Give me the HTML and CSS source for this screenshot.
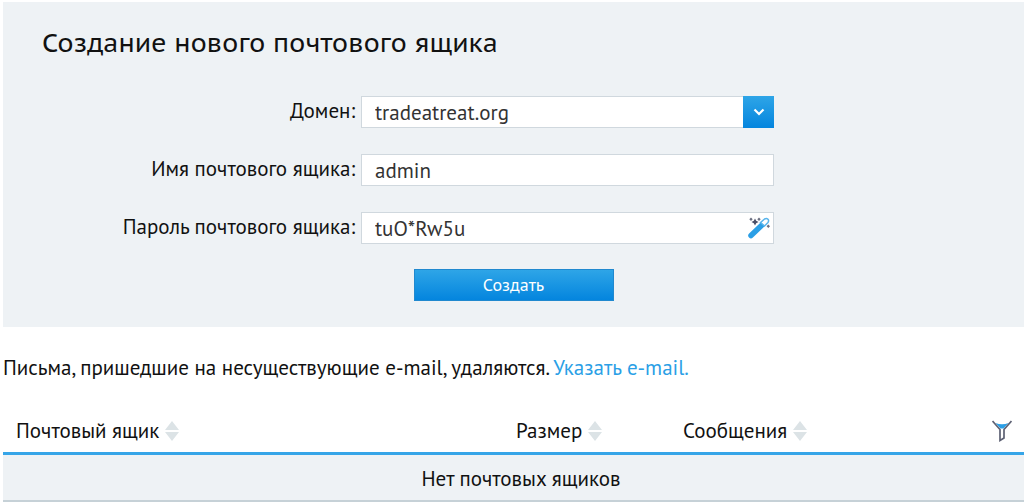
FILE: index.html
```html
<!DOCTYPE html>
<html lang="ru">
<head>
    <meta charset="UTF-8">
    <meta name="viewport" content="width=device-width, initial-scale=1.0">
    <title>Почтовые ящики</title>
    <link rel="stylesheet" href="styles.css">
</head>
<body>

    <!-- New mailbox form -->
    <form class="panel">
        <h1>Создание нового почтового ящика</h1>

        <div class="row">
            <label for="domain">Домен:</label>
            <div class="field">
                <select id="domain">
                    <option>tradeatreat.org</option>
                </select>
                <span class="arrow">
                    <svg width="12" height="8" viewBox="0 0 12 8">
                        <path d="M1.5 1.5 L6 6 L10.5 1.5" fill="none" stroke="#fff" stroke-width="2.2"/>
                    </svg>
                </span>
            </div>
        </div>

        <div class="row">
            <label for="mailbox">Имя почтового ящика:</label>
            <div class="field">
                <input type="text" id="mailbox" value="admin">
            </div>
        </div>

        <div class="row">
            <label for="password">Пароль почтового ящика:</label>
            <div class="field">
                <input type="text" id="password" value="tuO*Rw5u">
                <button type="button" class="generate" aria-label="Сгенерировать пароль">
                    <svg width="22" height="22" viewBox="0 0 22 22">
                        <path d="M3 18.5 L14 8" stroke="#2b9fe6" stroke-width="5.5" stroke-linecap="round"/>
                        <path d="M12.5 5.5 L16.5 2 Q18.5 0.8 20 2.2 Q21.2 3.8 20 5.5 L16.5 9 Z" fill="#fff" stroke="#58b4ec" stroke-width="1.5"/>
                        <path d="M7 1.5 L8.2 3.8 L10.5 5 L8.2 6.2 L7 8.5 L5.8 6.2 L3.5 5 L5.8 3.8 Z" fill="#4b5068"/>
                        <path d="M3 0.5 L4.7 2.2 L3 4 L1.3 2.2 Z M11 0.5 L12.7 2.2 L11 4 L9.3 2.2 Z M20.3 7.5 L22 9.3 L20.3 11 L18.6 9.3 Z" fill="#6c7082"/>
                    </svg>
                </button>
            </div>
        </div>

        <button type="submit" class="create">Создать</button>
    </form>

    <p class="note">Письма, пришедшие на несуществующие e-mail, удаляются. <a href="#">Указать e-mail.</a></p>

    <!-- Mailbox list -->
    <table class="mailboxes">
        <thead>
            <tr>
                <th class="name">Почтовый ящик <svg class="sort" width="14" height="20" viewBox="0 0 14 20"><path d="M7 0 L14 9 H0 Z M0 11 H14 L7 20 Z"/></svg></th>
                <th class="size">Размер <svg class="sort" width="14" height="20" viewBox="0 0 14 20"><path d="M7 0 L14 9 H0 Z M0 11 H14 L7 20 Z"/></svg></th>
                <th>Сообщения <svg class="sort" width="14" height="20" viewBox="0 0 14 20"><path d="M7 0 L14 9 H0 Z M0 11 H14 L7 20 Z"/></svg></th>
                <th class="filter">
                    <button type="button" aria-label="Фильтр">
                        <svg width="20" height="22" viewBox="0 0 20 22">
                            <path d="M3.5 3 Q10 5.5 16.5 3 L11.5 8.5 H8.5 Z" fill="#2b9fe6"/>
                            <path d="M0.5 1 L8 9.5 V20.5 L12 18 V9.5 L19.5 1" fill="none" stroke="#5d6173" stroke-width="1.7"/>
                        </svg>
                    </button>
                </th>
            </tr>
        </thead>
        <tbody>
            <tr>
                <td colspan="4">Нет почтовых ящиков</td>
            </tr>
        </tbody>
    </table>

</body>
</html>
```

FILE: styles.css
```css
body {
    margin: 2px 0 0 3px;
    font-family: "PT Sans", "Noto Sans", sans-serif;
    font-size: 21px;
    line-height: 28px;
    color: #111;
    background-color: #fff;
}
input, select, button {
    font-family: inherit;
    font-size: inherit;
    color: inherit;
}
.panel {
    padding: 24px 0 26px;
    background-color: #eef2f5;
}
.panel h1 {
    margin: 0 0 36px 39px;
    font-family: "PT Sans Caption", "Noto Sans", sans-serif;
    font-size: 26px;
    font-weight: normal;
    line-height: 34px;
}
.row {
    display: grid;
    grid-template-columns: 352px minmax(0, 413px);
    column-gap: 6px;
    margin-bottom: 26px;
}
.row label {
    line-height: 30px;
    text-align: right;
    white-space: nowrap;
}
.field {
    position: relative;
    height: 32px;
}
.field input, .field select {
    box-sizing: border-box;
    width: 100%;
    height: 32px;
    margin: 0;
    padding: 0 40px 0 13px;
    border: 1px solid #d0d8de;
    border-radius: 0;
    background-color: #fff;
    color: #333;
    appearance: none;
    display: block;
}
.arrow {
    position: absolute;
    top: 0;
    right: 0;
    width: 31px;
    height: 32px;
    display: flex;
    align-items: center;
    justify-content: center;
    background: linear-gradient(#2ea5e7, #0485de);
    pointer-events: none;
}
.generate {
    position: absolute;
    top: 5px;
    right: 4px;
    padding: 0;
    border: none;
    background: none;
    cursor: pointer;
}
.generate svg, .filter svg {
    display: block;
}
.create {
    display: block;
    width: 200px;
    height: 32px;
    margin: -1px auto 0;
    padding: 0 0 2px;
    border: 1px solid #2089cf;
    background: linear-gradient(#2ea5e7, #0485de);
    color: #fff;
    font-size: 18px;
    cursor: pointer;
}
.note {
    margin: 27px 0 35px;
}
.note a {
    color: #2b9fe6;
    text-decoration: none;
}
.mailboxes {
    width: 100%;
    border-collapse: collapse;
}
.mailboxes th {
    padding: 0 0 7px 13px;
    font-weight: normal;
    text-align: left;
    border-bottom: 3px solid #36a5e8;
}
.mailboxes .name {
    width: 487px;
}
.mailboxes .size {
    width: 154px;
}
.mailboxes .filter {
    padding-right: 12px;
}
.filter button {
    display: block;
    margin-left: auto;
    padding: 0;
    border: none;
    background: none;
    cursor: pointer;
}
.sort {
    padding-bottom: 3px;
    vertical-align: middle;
    fill: #dce3e6;
}
.mailboxes td {
    height: 43px;
    padding: 2px 0 0 15px;
    text-align: center;
    background-color: #eef2f5;
    border-bottom: 2px solid #c6d1d7;
}
```
